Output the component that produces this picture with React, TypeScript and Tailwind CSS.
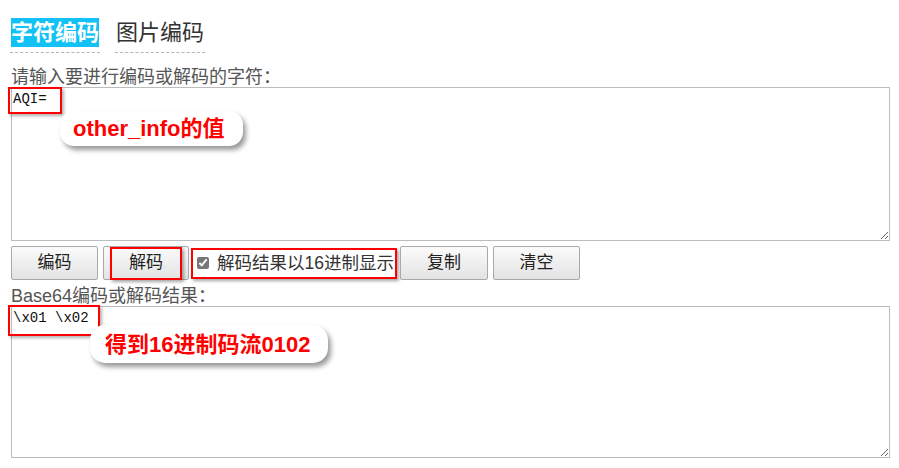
import React from 'react';

const font = "font-['Liberation_Sans','Noto_Sans_CJK_SC',sans-serif]";

const Btn: React.FC<{ label: string; className?: string }> = ({ label, className }) => (
  <button
    className={`h-[34px] rounded-[2px] border border-[#a9a9a9] bg-gradient-to-b from-[#fbfbfb] to-[#e3e3e3] text-[17px] text-[#222] ${className ?? ''}`}
  >
    {label}
  </button>
);

const App: React.FC = () => {
  return (
    <div className={`h-[468px] w-[899px] bg-white pl-[11px] pt-[18px] ${font}`}>
      {/* tabs */}
      <div className="flex items-start gap-[15px]">
        <div className="-ml-[1px] border-b border-dashed border-[#b5b5b5] px-[1px] pb-[5px]">
          <span className="block h-[29px] bg-[#12c2f6] text-[22px] font-bold leading-[29px] text-white">字符编码</span>
        </div>
        <div className="border-b border-dashed border-[#b5b5b5] px-[1px] pb-[5px]">
          <span className="block h-[29px] text-[22px] leading-[29px] text-[#333]">图片编码</span>
        </div>
      </div>

      <div className="mt-[14px] h-[20px] text-[18px] leading-[21px] text-[#555]">请输入要进行编码或解码的字符：</div>

      {/* input area */}
      <div className="relative w-[879px]">
        <textarea
          defaultValue="AQI="
          className="block h-[154px] w-full resize-y border border-[#bdbdbd] px-[1px] py-[3px] font-['Liberation_Mono',monospace] text-[14px] leading-[16px] text-[#111] outline-none"
        />
        <div className="pointer-events-none absolute left-[-3px] top-0 h-[27px] w-[54px] border-2 border-[#f00] shadow-[2px_2px_3px_rgba(0,0,0,0.3)]" />
        <div className="pointer-events-none absolute left-[49px] top-[24px] flex h-[35px] w-[183px] items-center rounded-[14px] bg-white pl-[13px] text-[22px] font-bold text-[#f00] shadow-[3px_4px_5px_rgba(0,0,0,0.4)]">
          other_info的值
        </div>
      </div>

      {/* buttons */}
      <div className="mt-[5px] flex items-center">
        <Btn label="编码" className="w-[87px]" />
        <div className="relative ml-[5px]">
          <Btn label="解码" className="w-[86px]" />
          <div className="pointer-events-none absolute left-[7px] top-[1px] h-[33px] w-[72px] border-2 border-[#f00] shadow-[2px_2px_3px_rgba(0,0,0,0.35)]" />
        </div>
        <label className="ml-[2px] flex h-[31px] w-[206px] items-center border-2 border-[#f00] bg-white pl-[4px] text-[17.5px] text-[#333] shadow-[2px_2px_3px_rgba(0,0,0,0.35)]">
          <input type="checkbox" defaultChecked className="mr-[8px] h-[12px] w-[12px] accent-[#777]" />
          解码结果以16进制显示
        </label>
        <Btn label="复制" className="ml-[3px] w-[88px]" />
        <Btn label="清空" className="ml-[5px] w-[87px]" />
      </div>

      <div className="mt-[6px] h-[20px] text-[18px] leading-[21px] text-[#555]">Base64编码或解码结果：</div>

      {/* output area */}
      <div className="relative w-[879px]">
        <textarea
          defaultValue="\x01 \x02"
          className="block h-[152px] w-full resize-y border border-[#bdbdbd] px-[1px] py-[3px] font-['Liberation_Mono',monospace] text-[14px] leading-[16px] text-[#111] outline-none"
        />
        <div className="pointer-events-none absolute left-[-3px] top-[-1px] h-[31px] w-[92px] border-2 border-[#f00] shadow-[2px_2px_3px_rgba(0,0,0,0.3)]" />
        <div className="pointer-events-none absolute left-[79px] top-[19px] flex h-[38px] w-[238px] items-center rounded-[15px] bg-white pl-[15px] text-[22px] font-bold text-[#f00] shadow-[3px_4px_5px_rgba(0,0,0,0.4)]">
          得到16进制码流0102
        </div>
      </div>
    </div>
  );
};

export default App;
